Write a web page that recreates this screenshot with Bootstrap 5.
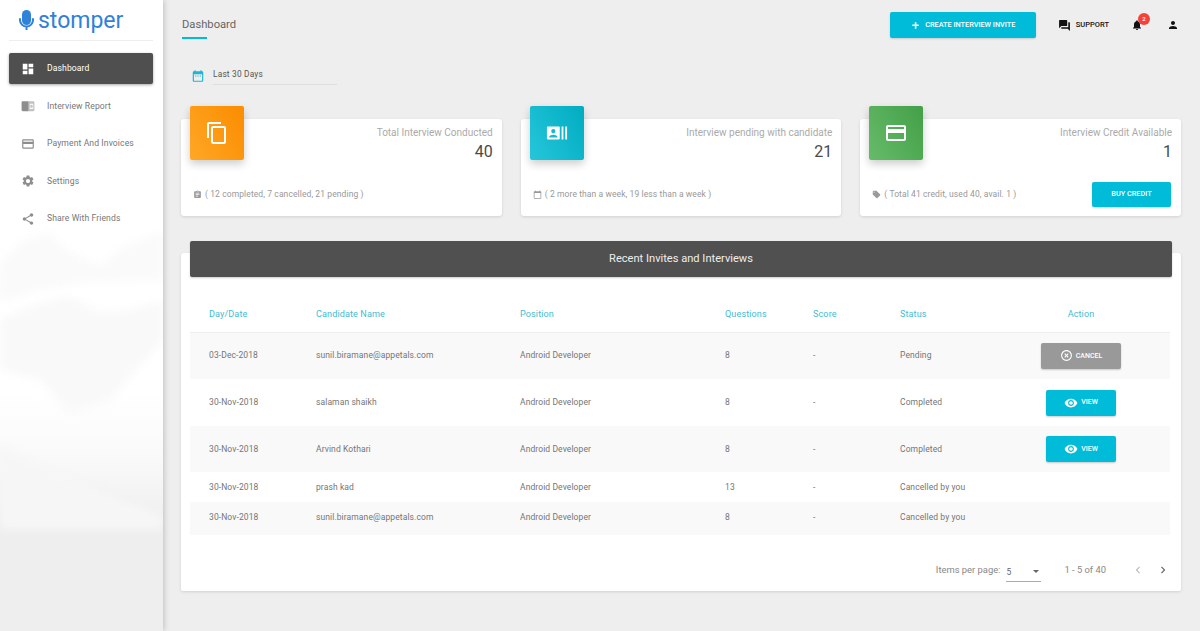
<!DOCTYPE html>
<html lang="en"><head><meta charset="utf-8"><title>Stomper Dashboard</title>
<link href="https://cdn.jsdelivr.net/npm/bootstrap@5.3.0/dist/css/bootstrap.min.css" rel="stylesheet">
<style>
html,body{height:631px;overflow:hidden}
body{font-family:Roboto,"Liberation Sans",sans-serif;background:#eee;color:#555;font-size:9.5px}
.ico{fill:currentColor;flex:none;display:block}
.side{width:163px;height:631px;flex:none;position:relative;overflow:hidden;background:linear-gradient(#fff 0,#fff 62%,#fafafa 72%,#f2f2f2 80%,#eee 84%);box-shadow:1px 0 6px rgba(0,0,0,.2);z-index:2;padding:0 10px 0 9px}
.side-art{position:absolute;left:-10px;top:230px;width:183px;height:300px;filter:blur(4px)}
.side-in{position:relative}
.logo{height:41px;border-bottom:1px solid #eee;color:#2f82d8;font-size:23px;font-weight:400;line-height:1;padding:0 0 0 10px;gap:4px}
.menu{margin-top:12px;gap:6.5px}
.mitem{height:31px;color:#777;padding-left:12px;gap:12px;font-size:8.6px;border-radius:2px;letter-spacing:.1px}
.mitem .ico{color:#8e8e8e}
.mitem.on{background:#4f4f4f;color:#fff;box-shadow:0 1px 3px rgba(0,0,0,.35)}
.mitem.on .ico{color:#fff}
.main{flex:1;min-width:0;padding:0 19px 0 18px}
.top{height:50px}
.ttl{font-size:11.2px;color:#666;line-height:14px;margin:18px 0 0 1px}
.ttl::after{content:"";display:block;width:25px;height:2px;background:#00bcd9;margin-top:5px}
.tools{margin-top:12px;height:26px;margin-right:1px}
.cta{background:#00bcd9;color:#fff;font-size:7.3px;font-weight:500;border:0;border-radius:2px;height:26px;width:146px;box-shadow:0 1px 2px rgba(0,0,0,.15);gap:4px;padding:0}
.tool{color:#111;font-size:7.5px;font-weight:500;gap:5px}
.g1{margin-left:22px}.g2{margin-left:22px}.g3{margin-left:24px;margin-right:1px}
.bell{position:relative}
.pip{position:absolute;left:7px;top:-6px;width:12px;height:12px;border-radius:50%;background:#f44336;color:#fff;font-size:6px;line-height:12px;text-align:center}
.range{margin:17px 0 0 10px;height:26px;gap:8px}
.range-ic{color:#1fb5d3;margin-top:2px}
.range-f{width:124px;border-bottom:1px solid #ddd;padding:1px 0 4px;font-size:8.3px;color:#555;line-height:12px;letter-spacing:.2px}
.stats{margin-top:26px;gap:19px}
.stat{flex:1;background:#fff;height:97px;border-radius:3px;position:relative;box-shadow:0 1px 3px rgba(0,0,0,.12);padding:8px 9px 0 12px}
.tile{position:absolute;left:9px;top:-13px;width:54px;height:54px;border-radius:2px;color:#fff;display:flex;align-items:center;justify-content:center;box-shadow:0 4px 8px rgba(0,0,0,.2)}
.t-o{background:linear-gradient(60deg,#ffa726,#fb8c00)}
.t-c{background:linear-gradient(60deg,#26c6da,#00acc1)}
.t-g{background:linear-gradient(60deg,#66bb6a,#43a047)}
.s-lbl{font-size:10px;color:#aaa;text-align:right;line-height:12px}
.s-num{font-size:16px;color:#4a4a4a;text-align:right;line-height:19px;margin-top:3px}
.s-foot{position:absolute;left:12px;right:10px;top:62px;height:26px;color:#999;font-size:8.5px;gap:3px;letter-spacing:.1px}
.buy{margin-left:auto;background:#00bcd9;color:#fff;font-size:7.3px;font-weight:500;border:0;border-radius:2px;height:25px;width:79px;padding:0;box-shadow:0 1px 2px rgba(0,0,0,.15)}
.panel{background:#fff;margin-top:37px;height:338px;position:relative;border-radius:3px 3px 2px 2px;box-shadow:0 1px 3px rgba(0,0,0,.12);padding:0 11px 0 9px}
.phead{position:absolute;left:9px;right:9px;top:-12px;height:36px;background:#505050;color:#eee;font-size:11.1px;line-height:36px;text-align:center;border-radius:2px;box-shadow:0 1px 2px rgba(0,0,0,.2)}
.tbl-wrap{padding-top:45px}
.grid{width:980px;table-layout:fixed;margin:0;border-collapse:collapse;font-size:8.5px;letter-spacing:.1px}
.grid th{font-weight:400;color:#45bcd0;font-size:9.1px;height:34px;padding:0 0 0 19px;border-bottom:1px solid #eee;vertical-align:middle;background:#fff}
.grid td{padding:0 0 0 19px;vertical-align:middle;border:0;color:#757575;background:transparent}
.grid tr.z{background:#f9f9f9}
.grid .act{padding:0;text-align:center}
.r47{height:47px}.r46{height:46px}.r30{height:30px}.r33{height:33px}
.grid .r33 td{padding-bottom:2px}
.bt{display:inline-flex;align-items:center;justify-content:center;gap:3px;border:0;border-radius:2px;height:26px;width:70px;background:#00bcd9;color:#fff;font-size:7px;font-weight:500;padding:0;box-shadow:0 1px 2px rgba(0,0,0,.2)}
.bt.gr{width:80px;background:#999}
.pager{position:absolute;right:0;top:305px;color:#888;font-size:9.4px;height:24px;padding-right:11px}
.psel{width:35px;margin:5px 0 0 6px;border-bottom:1px solid #aaa;height:19px;color:#666;font-size:8.5px;padding-top:3px;position:relative}
.psel::after{content:"";position:absolute;right:2px;top:7px;border:3px solid transparent;border-top:3px solid #666}
.p-count{margin-left:23px}
.p-prev{margin-left:25px;color:#bbb}
.p-next{margin-left:11px;color:#666}
</style></head>
<body class="d-flex">
<svg width="0" height="0" class="position-absolute"><defs>
<symbol id="i-dash" viewBox="0 0 24 24"><path d="M3 13h8V3H3v10zm0 8h8v-6H3v6zm10 0h8V11h-8v10zm0-18v6h8V3h-8z"/></symbol>
<symbol id="i-read" viewBox="0 0 24 24"><path d="M3 4h10v17H3c-1.100 0-2-.9-2-2V6c0-1.100.9-2 2-2z"/><path opacity=".55" d="M13 4h8c1.100 0 2 .9 2 2v13c0 1.100-.9 2-2 2h-8zm2 4v9h6V8z" fill-rule="evenodd"/><path opacity=".55" d="M16 10h4v5h-4z"/></symbol>
<symbol id="i-card" viewBox="0 0 24 24"><path d="M20 4H4c-1.110 0-1.990.89-1.990 2L2 18c0 1.110.89 2 2 2h16c1.110 0 2-.89 2-2V6c0-1.110-.89-2-2-2zm0 14H4v-6h16v6zm0-10H4V6h16v2z"/></symbol>
<symbol id="i-gear" viewBox="0 0 24 24"><path d="M19.140 12.940c.04-.3.06-.61.06-.94 0-.32-.02-.64-.07-.94l2.030-1.580c.18-.14.23-.41.12-.61l-1.920-3.320c-.12-.22-.37-.29-.59-.22l-2.390.96c-.5-.38-1.030-.7-1.620-.94l-.36-2.540c-.04-.24-.24-.41-.48-.41h-3.840c-.24 0-.43.17-.47.41l-.36 2.540c-.59.24-1.130.57-1.620.94l-2.390-.96c-.22-.08-.47 0-.59.22L2.740 8.870c-.12.21-.08.47.12.61l2.030 1.580c-.05.3-.09.63-.09.94s.02.64.07.94l-2.030 1.580c-.18.14-.23.41-.12.61l1.920 3.320c.12.22.37.29.59.22l2.390-.96c.5.38 1.030.7 1.620.94l.36 2.540c.05.24.24.41.48.41h3.840c.24 0 .44-.17.47-.41l.36-2.540c.59-.24 1.130-.56 1.620-.94l2.390.96c.22.08.47 0 .59-.22l1.920-3.320c.12-.22.07-.47-.12-.61l-2.010-1.580zM12 15.600c-1.980 0-3.600-1.620-3.600-3.600s1.620-3.600 3.600-3.600 3.600 1.620 3.600 3.600-1.620 3.600-3.600 3.600z"/></symbol>
<symbol id="i-share" viewBox="0 0 24 24"><path d="M18 16.080c-.76 0-1.440.3-1.960.77L8.910 12.700c.05-.23.09-.46.09-.7s-.04-.47-.09-.7l7.050-4.110c.54.5 1.250.81 2.040.81 1.660 0 3-1.340 3-3s-1.340-3-3-3-3 1.340-3 3c0 .24.04.47.09.7L8.040 9.810C7.500 9.310 6.790 9 6 9c-1.660 0-3 1.340-3 3s1.340 3 3 3c.79 0 1.500-.31 2.040-.81l7.120 4.160c-.05.21-.08.43-.08.65 0 1.610 1.310 2.920 2.920 2.920 1.610 0 2.920-1.310 2.920-2.920s-1.310-2.920-2.920-2.920z"/></symbol>
<symbol id="i-copy" viewBox="0 0 24 24"><path d="M16 1H4c-1.100 0-2 .9-2 2v14h2V3h12V1zm3 4H8c-1.100 0-2 .9-2 2v14c0 1.100.9 2 2 2h11c1.100 0 2-.9 2-2V7c0-1.100-.9-2-2-2zm0 16H8V7h11v14z"/></symbol>
<symbol id="i-actors" viewBox="0 0 24 24"><path d="M21 5v14h2V5h-2zm-4 14h2V5h-2v14zM14 5H2c-.55 0-1 .45-1 1v12c0 .55.45 1 1 1h12c.55 0 1-.45 1-1V6c0-.55-.45-1-1-1zM8 7.750c1.240 0 2.250 1.010 2.250 2.250S9.240 12.250 8 12.250 5.750 11.240 5.750 10 6.760 7.750 8 7.750zM12.500 17h-9v-.75c0-1.500 3-2.250 4.500-2.250s4.500.75 4.500 2.250V17z"/></symbol>
<symbol id="i-assign" viewBox="0 0 24 24"><path d="M19 3h-4.180C14.400 1.840 13.300 1 12 1c-1.300 0-2.400.84-2.820 2H5c-1.100 0-2 .9-2 2v14c0 1.100.9 2 2 2h14c1.100 0 2-.9 2-2V5c0-1.100-.9-2-2-2zm-7 0c.55 0 1 .45 1 1s-.45 1-1 1-1-.45-1-1 .45-1 1-1zm2 14H7v-2h7v2zm3-4H7v-2h10v2zm0-4H7V7h10v2z"/></symbol>
<symbol id="i-cal" viewBox="0 0 24 24"><path d="M20 3h-1V1h-2v2H7V1H5v2H4c-1.100 0-2 .9-2 2v16c0 1.100.9 2 2 2h16c1.100 0 2-.9 2-2V5c0-1.100-.9-2-2-2zm0 18H4V8h16v13z"/></symbol>
<symbol id="i-date" viewBox="0 0 24 24"><path d="M9 11H7v2h2v-2zm4 0h-2v2h2v-2zm4 0h-2v2h2v-2zm2-7h-1V2h-2v2H8V2H6v2H5c-1.110 0-1.990.9-1.990 2L3 20c0 1.100.89 2 2 2h14c1.100 0 2-.9 2-2V6c0-1.100-.9-2-2-2zm0 16H5V9h14v11z"/></symbol>
<symbol id="i-tag" viewBox="0 0 24 24"><path d="M21.410 11.580l-9-9C12.050 2.220 11.550 2 11 2H4c-1.100 0-2 .9-2 2v7c0 .55.22 1.050.59 1.420l9 9c.36.36.86.58 1.410.58.55 0 1.050-.22 1.410-.59l7-7c.37-.36.59-.86.59-1.410 0-.55-.23-1.060-.59-1.420zM5.500 7C4.670 7 4 6.330 4 5.500S4.670 4 5.500 4 7 4.670 7 5.500 6.330 7 5.500 7z"/></symbol>
<symbol id="i-qa" viewBox="0 0 24 24"><path d="M21 6h-2v9H6v2c0 .55.45 1 1 1h11l4 4V7c0-.55-.45-1-1-1zm-4 6V3c0-.55-.45-1-1-1H3c-.55 0-1 .45-1 1v14l4-4h10c.55 0 1-.45 1-1z"/></symbol>
<symbol id="i-bell" viewBox="0 0 24 24"><path d="M12 22c1.100 0 2-.9 2-2h-4c0 1.100.89 2 2 2zm6-6v-5c0-3.070-1.640-5.640-4.500-6.320V4c0-.83-.67-1.500-1.500-1.500s-1.500.67-1.500 1.500v.68C7.630 5.360 6 7.920 6 11v5l-2 2v1h16v-1l-2-2z"/></symbol>
<symbol id="i-person" viewBox="0 0 24 24"><path d="M12 12c2.210 0 4-1.790 4-4s-1.790-4-4-4-4 1.790-4 4 1.790 4 4 4zm0 2c-2.670 0-8 1.340-8 4v2h16v-2c0-2.660-5.330-4-8-4z"/></symbol>
<symbol id="i-add" viewBox="0 0 24 24"><path d="M19 13h-5v6h-3.500v-6H5v-3h5.500V5H14v5h5v3z"/></symbol>
<symbol id="i-eye" viewBox="0 0 24 24"><path d="M12 4.500C7 4.500 2.730 7.610 1 12c1.730 4.390 6 7.500 11 7.500s9.270-3.110 11-7.500c-1.730-4.390-6-7.500-11-7.500zM12 17c-2.760 0-5-2.240-5-5s2.240-5 5-5 5 2.240 5 5-2.240 5-5 5zm0-8c-1.660 0-3 1.340-3 3s1.340 3 3 3 3-1.340 3-3-1.340-3-3-3z"/></symbol>
<symbol id="i-off" viewBox="0 0 24 24"><path d="M14.590 8L12 10.590 9.410 8 8 9.410 10.590 12 8 14.590 9.410 16 12 13.410 14.590 16 16 14.590 13.410 12 16 9.410 14.590 8zM12 2C6.470 2 2 6.470 2 12s4.470 10 10 10 10-4.470 10-10S17.530 2 12 2zm0 18c-4.410 0-8-3.590-8-8s3.590-8 8-8 8 3.590 8 8-3.590 8-8 8z"/></symbol>
</defs></svg>

<aside class="side">
  <svg class="side-art" viewBox="0 0 183 300" preserveAspectRatio="none" aria-hidden="true">
    <path d="M10 34L32 12 58 2 80 22 110 36 132 18 173 2V50L100 52 50 60 10 72Z" fill="#fafafa"/>
    <path d="M10 90L44 74 80 66 110 82 140 80 173 70V110L120 170 80 184 50 150 10 140Z" fill="#f9f9f9"/>
    <path d="M10 215L60 240 110 262 173 285V300H10Z" fill="#f6f6f6"/>
  </svg>
  <div class="side-in">
    <div class="logo d-flex align-items-center">
      <svg width="15" height="20" viewBox="0 0 15 20" class="ico"><rect x="3" y="0" width="9" height="15" rx="4.500" fill="#2f82d8"/><path d="M1 9v1a6.500 6.500 0 0 0 13 0V9M7.500 16.500V20" fill="none" stroke="#2f82d8" stroke-width="2" stroke-linecap="round"/></svg>
      <span>stomper</span>
    </div>
    <nav class="menu d-flex flex-column">
      <div class="mitem on d-flex align-items-center"><svg class="ico" width="14" height="14"><use href="#i-dash"/></svg>Dashboard</div>
      <div class="mitem d-flex align-items-center"><svg class="ico" width="14" height="14"><use href="#i-read"/></svg>Interview Report</div>
      <div class="mitem d-flex align-items-center"><svg class="ico" width="14" height="14"><use href="#i-card"/></svg>Payment And Invoices</div>
      <div class="mitem d-flex align-items-center"><svg class="ico" width="14" height="14"><use href="#i-gear"/></svg>Settings</div>
      <div class="mitem d-flex align-items-center"><svg class="ico" width="14" height="14"><use href="#i-share"/></svg>Share With Friends</div>
    </nav>
  </div>
</aside>

<main class="main">
  <header class="top d-flex align-items-start justify-content-between">
    <div class="ttl">Dashboard</div>
    <div class="tools d-flex align-items-center">
      <button class="cta btn d-flex align-items-center justify-content-center"><svg class="ico" width="11" height="11"><use href="#i-add"/></svg>CREATE INTERVIEW INVITE</button>
      <div class="tool g1 d-flex align-items-center"><svg class="ico" width="13" height="13"><use href="#i-qa"/></svg>SUPPORT</div>
      <div class="bell tool g2"><svg class="ico" width="12" height="12"><use href="#i-bell"/></svg><span class="pip">2</span></div>
      <div class="tool g3"><svg class="ico" width="12" height="12"><use href="#i-person"/></svg></div>
    </div>
  </header>
  <div class="range d-flex align-items-start">
    <svg class="ico range-ic" width="14" height="14"><use href="#i-date"/></svg>
    <div class="range-f">Last 30 Days</div>
  </div>
  <section class="stats d-flex">
    <article class="stat">
      <div class="tile t-o"><svg class="ico" width="24" height="24"><use href="#i-copy"/></svg></div>
      <div class="s-lbl">Total Interview Conducted</div><div class="s-num">40</div>
      <div class="s-foot d-flex align-items-center"><svg class="ico" width="9" height="9"><use href="#i-assign"/></svg>( 12 completed, 7 cancelled, 21 pending )</div>
    </article>
    <article class="stat">
      <div class="tile t-c"><svg class="ico" width="22" height="22"><use href="#i-actors"/></svg></div>
      <div class="s-lbl">Interview pending with candidate</div><div class="s-num">21</div>
      <div class="s-foot d-flex align-items-center"><svg class="ico" width="9" height="9"><use href="#i-cal"/></svg>( 2 more than a week, 19 less than a week )</div>
    </article>
    <article class="stat">
      <div class="tile t-g"><svg class="ico" width="24" height="24"><use href="#i-card"/></svg></div>
      <div class="s-lbl">Interview Credit Available</div><div class="s-num">1</div>
      <div class="s-foot d-flex align-items-center"><svg class="ico" width="9" height="9"><use href="#i-tag"/></svg>( Total 41 credit, used 40, avail. 1 )<button class="buy btn">BUY CREDIT</button></div>
    </article>
  </section>
  <section class="panel">
    <div class="phead">Recent Invites and Interviews</div>
    <div class="tbl-wrap">
      <table class="table grid">
        <colgroup><col style="width:107px"><col style="width:204px"><col style="width:205px"><col style="width:88px"><col style="width:87px"><col style="width:111px"><col style="width:178px"></colgroup>
        <thead><tr><th>Day/Date</th><th>Candidate Name</th><th>Position</th><th>Questions</th><th>Score</th><th>Status</th><th class="act">Action</th></tr></thead>
        <tbody>
          <tr class="z r47"><td>03-Dec-2018</td><td>sunil.biramane@appetals.com</td><td>Android Developer</td><td>8</td><td>-</td><td>Pending</td><td class="act"><button class="bt gr"><svg class="ico" width="13" height="13"><use href="#i-off"/></svg>CANCEL</button></td></tr>
          <tr class="r47"><td>30-Nov-2018</td><td>salaman shaikh</td><td>Android Developer</td><td>8</td><td>-</td><td>Completed</td><td class="act"><button class="bt"><svg class="ico" width="14" height="14"><use href="#i-eye"/></svg>VIEW</button></td></tr>
          <tr class="z r46"><td>30-Nov-2018</td><td>Arvind Kothari</td><td>Android Developer</td><td>8</td><td>-</td><td>Completed</td><td class="act"><button class="bt"><svg class="ico" width="14" height="14"><use href="#i-eye"/></svg>VIEW</button></td></tr>
          <tr class="r30"><td>30-Nov-2018</td><td>prash kad</td><td>Android Developer</td><td>13</td><td>-</td><td>Cancelled by you</td><td></td></tr>
          <tr class="z r33"><td>30-Nov-2018</td><td>sunil.biramane@appetals.com</td><td>Android Developer</td><td>8</td><td>-</td><td>Cancelled by you</td><td></td></tr>
        </tbody>
      </table>
    </div>
    <div class="pager d-flex align-items-center">
      <span>Items per page:</span>
      <div class="psel">5</div>
      <span class="p-count">1 - 5 of 40</span>
      <svg class="ico p-prev" width="14" height="14" viewBox="0 0 24 24"><path d="M15.410 7.410L14 6l-6 6 6 6 1.410-1.410L10.830 12z"/></svg>
      <svg class="ico p-next" width="14" height="14" viewBox="0 0 24 24"><path d="M10 6L8.590 7.410 13.170 12l-4.580 4.590L10 18l6-6z"/></svg>
    </div>
  </section>
</main>
</body></html>
